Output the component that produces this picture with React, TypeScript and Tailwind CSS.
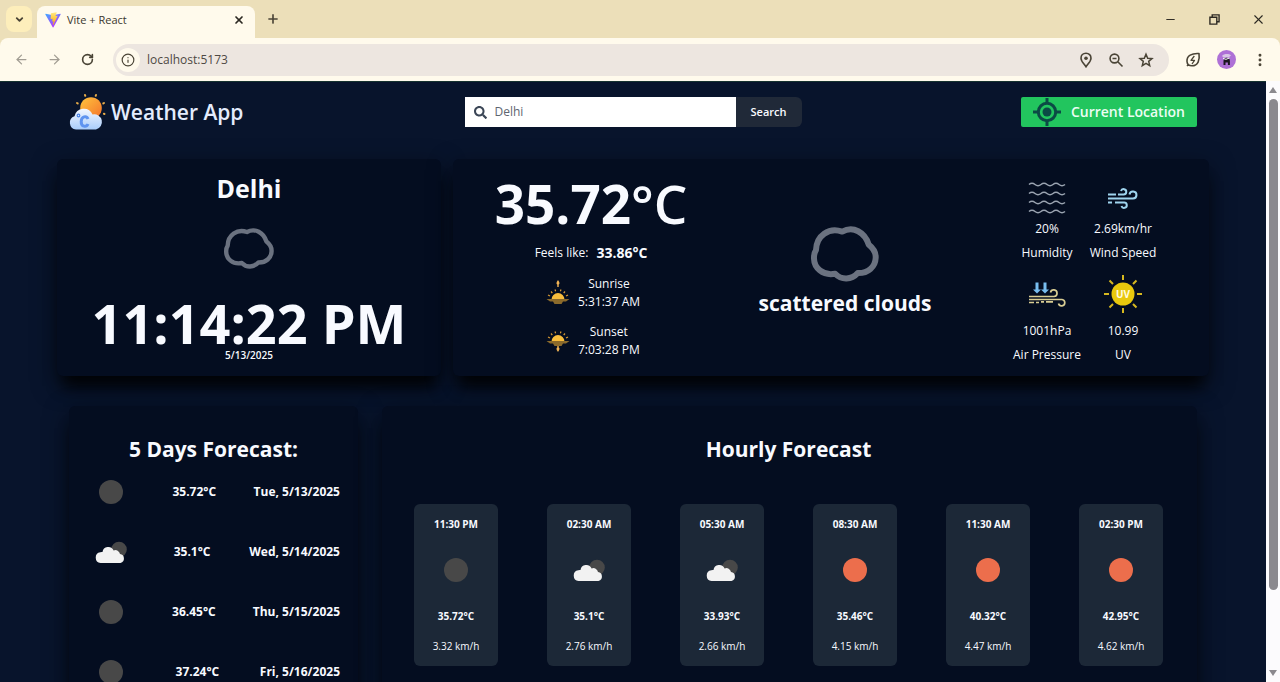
import type { ReactNode } from "react";
import { FaSearch } from "react-icons/fa";
import { ArrowLeft, ArrowRight, Info, RotateCw, MapPin, ZoomOut, Star, Plus, X, Minus, ChevronDown, EllipsisVertical } from "lucide-react";

type Sky = "moon" | "cloud" | "sun";

const days: { sky: Sky; temp: string; date: string }[] = [
  { sky: "moon", temp: "35.72°C", date: "Tue, 5/13/2025" },
  { sky: "cloud", temp: "35.1°C", date: "Wed, 5/14/2025" },
  { sky: "moon", temp: "36.45°C", date: "Thu, 5/15/2025" },
  { sky: "moon", temp: "37.24°C", date: "Fri, 5/16/2025" },
];

const hours: { time: string; sky: Sky; temp: string; wind: string }[] = [
  { time: "11:30 PM", sky: "moon", temp: "35.72°C", wind: "3.32 km/h" },
  { time: "02:30 AM", sky: "cloud", temp: "35.1°C", wind: "2.76 km/h" },
  { time: "05:30 AM", sky: "cloud", temp: "33.93°C", wind: "2.66 km/h" },
  { time: "08:30 AM", sky: "sun", temp: "35.46°C", wind: "4.15 km/h" },
  { time: "11:30 AM", sky: "sun", temp: "40.32°C", wind: "4.47 km/h" },
  { time: "02:30 PM", sky: "sun", temp: "42.95°C", wind: "4.62 km/h" },
];

const card = "rounded-md bg-[#040d20] shadow-[0_16px_14px_-6px_#000000cc,0_8px_24px_#00000080]";

function ViteLogo() {
  return (
    <svg viewBox="0 0 410 404" className="size-4" aria-hidden="true">
      <defs>
        <linearGradient id="viteBody" x1="0" y1="0" x2="0.6" y2="1">
          <stop stopColor="#41a8ff" />
          <stop offset="1" stopColor="#bd34fe" />
        </linearGradient>
        <linearGradient id="viteBolt" x1="0" y1="0" x2="0" y2="1">
          <stop stopColor="#ffea83" />
          <stop offset="1" stopColor="#ffa800" />
        </linearGradient>
      </defs>
      <path d="M400 59 216 389c-4 7-14 7-18 0L10 59c-4-7 2-16 10-14l185 33 185-33c8-2 14 7 10 14Z" fill="url(#viteBody)" />
      <path d="M293 2 156 28c-2 1-4 3-4 5l-8 142c0 4 3 6 6 5l38-9c4-1 7 3 6 6l-11 56c-1 3 3 6 6 5l24-7c4-1 7 2 6 6l-18 87c-1 5 6 8 9 4l113-227c2-3-1-7-5-6l-39 7c-4 1-7-2-6-6l26-88c1-4-2-7-6-6Z" fill="url(#viteBolt)" />
    </svg>
  );
}

function BrandIcon() {
  return (
    <svg viewBox="0 0 38 38" className="size-[38px]" aria-hidden="true">
      <defs>
        <linearGradient id="brandSun" x1="0" y1="0" x2="1" y2="1">
          <stop stopColor="#ffc53d" />
          <stop offset="1" stopColor="#f4722b" />
        </linearGradient>
        <linearGradient id="brandCloud" x1="0" y1="0" x2="0" y2="1">
          <stop stopColor="#f3f7ff" />
          <stop offset="1" stopColor="#a9cdfb" />
        </linearGradient>
      </defs>
      <g stroke="#e9ae4a" strokeWidth="2" strokeLinecap="round">
        <path d="M16 2l.3.800M27 2l-.3.800M35 10l-.7.400M35.500 21l-.6-.2M8 10l.7.400" />
      </g>
      <circle cx="22" cy="15" r="10.800" fill="url(#brandSun)" />
      <path d="M7 36.500a6.800 6.800 0 0 1-1.500-13.200A9.500 9.500 0 0 1 23.500 21.500A7.600 7.600 0 0 1 27 36.500Z" fill="url(#brandCloud)" />
      <circle cx="9.500" cy="22.500" r="1.300" fill="none" stroke="#4a84e8" strokeWidth="1.200" />
      <path d="M19 26C17.500 22.500 12.500 23 12.200 28.500c-.2 5.500 5.300 6 6.800 2.500" fill="none" stroke="#5f94f0" strokeWidth="3" />
    </svg>
  );
}

function CloudOutline({ className }: { className: string }) {
  return (
    <svg viewBox="0 0 205 167" className={className} role="img" aria-label="Scattered clouds">
      <path
        d="M94 16C128-2 162 18 174 55C188 66 196 78 195 95C194 122 172 142 141 141C122 162 92 163 73 143C36 150 8 126 9 94C9 84 11 78 15 72C16 28 54 2 94 16Z"
        fill="none"
        stroke="#6b7280"
        strokeWidth="18"
        strokeLinejoin="round"
      />
    </svg>
  );
}

function SkyIcon({ sky }: { sky: Sky }) {
  return (
    <svg viewBox="0 0 48 48" className="size-12" aria-hidden="true">
      {sky === "moon" && <circle cx="24" cy="24" r="12" fill="#484848" />}
      {sky === "sun" && <circle cx="24" cy="24" r="12" fill="#ec6e4c" />}
      {sky === "cloud" && (
        <>
          <circle cx="32" cy="21.500" r="7.800" fill="#484848" />
          <path d="M13.500 35a5.400 5.400 0 0 1-.2-10.700A3 3 0 0 1 15.500 24A5.800 5.800 0 0 1 26.600 22.500A4.600 4.600 0 0 1 33 26A4.600 4.600 0 0 1 33.500 35Z" fill="#f2f2f2" />
        </>
      )}
    </svg>
  );
}

function HorizonIcon({ rising }: { rising: boolean }) {
  return (
    <svg viewBox="0 0 24 26" className="h-[26px] w-6" aria-hidden="true">
      <g transform={rising ? "translate(0 7)" : "translate(0 1)"}>
        <path d="M5.500 12.500a6.500 6.500 0 0 1 13 0Z" fill="#f8bd3c" />
        <path d="M.500 12h23L20 14.500H17L15.500 17h-7L7 14.500H4Z" fill="#8b6a2b" />
        <path d="M2 8l2 1M5 4.500l1.300 1.500M9 2.500l.600 1.800M15 2.500l-.6 1.800M19 4.500l-1.300 1.500M22 8l-2 1" stroke="#d99a34" strokeWidth="1.200" />
      </g>
      {rising ? (
        <path d="M12 0c2 2.500 1.800 4 .700 4.500V7h-1.400V4.500C10.200 4 10 2.500 12 0Z" fill="#f2b455" />
      ) : (
        <path d="M12 24c2-2.500 1.800-4 .700-4.500V18h-1.400v1.500C10.200 20 10 21.500 12 24Z" fill="#f2b455" />
      )}
    </svg>
  );
}

function HumidityIcon() {
  const wave = "q3-2.400 6 0t6 0 6 0 6 0 6 0 6 0";
  return (
    <svg viewBox="0 0 38 38" className="size-[38px]" fill="none" stroke="#9aa3b0" strokeWidth="1.600" aria-hidden="true">
      <path d={`M1 5.500${wave}M1 14.500${wave}M1 23.500${wave}M1 32.500${wave}`} />
    </svg>
  );
}

function WindIcon() {
  return (
    <svg viewBox="0 0 38 38" className="size-[38px]" fill="none" stroke="#9fd4ee" strokeWidth="2" aria-hidden="true">
      <path d="M4 19.500h25a3.500 3.500 0 1 0-3.500-4M4 15.500h8M14 15.500h5.500a2.700 2.700 0 1 0-2.500-3.500M4 23.500h4M11 23.500h9a2.700 2.700 0 1 1-2.500 3.500" />
    </svg>
  );
}

function PressureIcon() {
  return (
    <svg viewBox="0 0 38 38" className="size-[38px]" fill="none" aria-hidden="true">
      <path d="M7.500 7.500h3V14.500H13l-4 4-4-4h2.500ZM15.500 7.500h3V14.500H21l-4 4-4-4h2.500Z" fill="#78bdf0" />
      <g stroke="#d9cd93" strokeWidth="1.700">
        <path d="M1 21.500h25a3.300 3.300 0 1 0-3.500-4M1 24.500h33a3.200 3.200 0 1 1-3.500 4M1 27.500h5M8 27.500h3M13 26.800h3M18 26.800h7" />
      </g>
    </svg>
  );
}

function UvIcon() {
  return (
    <svg viewBox="0 0 38 38" className="size-[38px]" aria-hidden="true">
      <path d="M19 0v5M19 33v5M0 19h5M33 19h5M5.500 5.500 9 9M29 29l3.500 3.500M5.500 32.500 9 29M29 9l3.500-3.500" stroke="#d6b71f" strokeWidth="2" />
      <circle cx="19" cy="19" r="11.500" fill="#e9c80d" />
      <text x="19" y="22.500" textAnchor="middle" fontSize="10" fontWeight="700" fill="#fffbe0">UV</text>
    </svg>
  );
}

function TargetIcon() {
  return (
    <svg viewBox="0 0 28 28" className="size-7" fill="none" stroke="#0b4a45" aria-hidden="true">
      <circle cx="14" cy="14" r="8.700" strokeWidth="3" />
      <path d="M14 0v5M14 23v5M0 14h5M23 14h5" strokeWidth="3" />
      <circle cx="14" cy="14" r="4.500" fill="#0b4a45" stroke="none" />
    </svg>
  );
}

function Stat({ icon, value, label }: { icon: ReactNode; value: string; label: string }) {
  return (
    <div className="flex w-[76px] flex-col items-center whitespace-nowrap text-xs leading-6 font-medium">
      {icon}
      <span>{value}</span>
      <span>{label}</span>
    </div>
  );
}

function SunTime({ rising, label, time }: { rising: boolean; label: string; time: string }) {
  return (
    <div className="flex items-center gap-2">
      <HorizonIcon rising={rising} />
      <div className="text-center text-xs leading-[18px] font-medium">
        <p>{label}</p>
        <p>{time}</p>
      </div>
    </div>
  );
}

function BrowserBar() {
  const round = "flex size-6 items-center justify-center";
  return (
    <header className="shrink-0 bg-[#ecdfb9] text-[#4a4436]">
      <div className="flex h-[38px] items-center">
        <button aria-label="Search tabs" className="ml-1.5 flex size-[26px] items-center justify-center rounded-lg bg-[#fdeebb]">
          <ChevronDown size={11} strokeWidth={4} />
        </button>
        <div className="ml-[5px] flex h-8 w-[218px] items-center self-end rounded-t-lg bg-[#fffaec] pr-2 pb-1 pl-2">
          <ViteLogo />
          <span className="ml-1.5 flex-1 text-[11px] text-[#3b372e]">Vite + React</span>
          <button aria-label="Close tab" className="flex size-4 items-center justify-center text-[#2c2922]">
            <X size={12} strokeWidth={3.4} />
          </button>
        </div>
        <button aria-label="New tab" className="ml-2 flex size-5 items-center justify-center">
          <Plus size={14} strokeWidth={2.8} />
        </button>
        <div className="ml-auto flex items-center gap-5 pr-2.5 text-[#2c2922]">
          <button aria-label="Minimize" className={round}><Minus size={13} strokeWidth={1.8} /></button>
          <button aria-label="Restore" className={round}>
            <svg viewBox="0 0 12 12" className="size-[11px]" fill="none" stroke="currentColor" strokeWidth="1.500"><path d="M1 3.500h7.500V11H1ZM3.500 3.500V1H11v7.500H8.500" /></svg>
          </button>
          <button aria-label="Close" className={round}><X size={15} strokeWidth={1.8} /></button>
        </div>
      </div>
      <div className="flex h-[43px] items-center rounded-t-lg bg-[#fffaec] pr-2 pl-[9px]">
        <div className="flex gap-[9px]">
          <button aria-label="Back" className={`${round} text-[#a29d93]`}><ArrowLeft size={15} /></button>
          <button aria-label="Forward" className={`${round} text-[#a29d93]`}><ArrowRight size={15} /></button>
          <button aria-label="Reload" className={round}><RotateCw size={13} strokeWidth={3} /></button>
        </div>
        <div className="ml-3.5 flex h-8 flex-1 items-center rounded-full bg-[#ede6e0] pr-[11px] pl-[3px]">
          <span className={`${round} rounded-full bg-[#fffaec]`}><Info size={14} /></span>
          <input aria-label="Address" defaultValue="localhost:5173" className="ml-[7px] min-w-0 flex-1 bg-transparent text-xs text-[#4d4944] outline-none" />
          <div className="flex gap-[6px]">
            <button aria-label="Location access" className={round}>
              <svg viewBox="0 0 16 16" className="size-4" fill="none" stroke="currentColor" strokeWidth="1.600">
                <path d="M8 1.200C5 1.200 3 3.400 3 6.200c0 3 2.500 5 5 8.600 2.500-3.600 5-5.600 5-8.600 0-2.800-2-5-5-5Z" />
                <circle cx="8" cy="6.200" r="1.800" fill="currentColor" stroke="none" />
              </svg>
            </button>
            <button aria-label="Zoom" className={round}>
              <svg viewBox="0 0 16 16" className="size-4" fill="none" stroke="currentColor" strokeWidth="1.600">
                <circle cx="6.500" cy="6.500" r="4.400" />
                <path d="M4.500 6.500h4M9.800 9.800 14.500 14.500" />
              </svg>
            </button>
            <button aria-label="Bookmark" className={round}>
              <svg viewBox="0 0 16 16" className="size-4" fill="none" stroke="currentColor" strokeWidth="1.500">
                <path d="m8 2.200 1.700 4 4.300.4-3.300 2.800 1 4.300L8 11.400l-3.700 2.300 1-4.300L2 6.600l4.300-.4Z" />
              </svg>
            </button>
          </div>
        </div>
        <button aria-label="Energy saver" className={`${round} ml-3`}>
          <svg viewBox="0 0 16 16" className="size-4" fill="none" stroke="currentColor" strokeWidth="1.600" strokeLinejoin="round">
            <path d="M14 1.500C7 1 1.500 3.500 2 9.500c.200 3 2.500 4.300 5 4.300C13 13.800 15 8 14 1.500ZM2 14l1.500-1.500" />
            <path d="M9.300 4 6 8.300h3.500L7 12" strokeWidth="1.300" />
          </svg>
        </button>
        <button aria-label="Profile" className={`${round} ml-[9px]`}>
          <svg viewBox="0 0 19 19" className="size-[19px]">
            <circle cx="9.500" cy="9.500" r="9.500" fill="#ae70d6" />
            <path d="M5 6C7 3.500 12 3.500 14 5.500L11.500 7.500H6.500Z" fill="#d9c6e6" />
            <path d="M6.500 15v-4a3.200 3.200 0 0 1 6.400 0v4h-2v-2.500H8.500V15Z" fill="#1c1722" />
            <path d="M6 8.500l3 .800 3.500-1.300" stroke="#fff" strokeWidth="1" fill="none" />
          </svg>
        </button>
        <button aria-label="Menu" className={`${round} ml-[10px]`}><EllipsisVertical size={16} strokeWidth={2.4} /></button>
      </div>
    </header>
  );
}

export default function App() {
  return (
    <div className="flex h-screen flex-col overflow-hidden font-['Open_Sans','Noto_Sans',sans-serif]">
      <BrowserBar />
      <div className="flex min-h-0 flex-1">
        <main className="flex min-w-0 flex-1 flex-col overflow-hidden border-t border-[#16322f] bg-[#08142c] px-[69px] pt-[11px] text-[#f8faff]">
          <div className="flex shrink-0 items-center justify-between">
            <div className="flex flex-1 items-center gap-1">
              <BrandIcon />
              <h1 className="text-[21px] leading-[38px] font-semibold text-[#e3ecfd]">Weather App</h1>
            </div>
            <form className="flex h-[30px]" onSubmit={(e) => e.preventDefault()}>
              <label className="flex w-[271px] items-center gap-2 bg-white pl-[9px] text-[#3b4656]">
                <FaSearch size={13} />
                <input aria-label="City" defaultValue="Delhi" className="min-w-0 flex-1 text-xs text-[#5d6570] outline-none" />
              </label>
              <button className="w-[66px] rounded-r-md bg-[#202938] text-[11px] font-semibold">Search</button>
            </form>
            <div className="flex flex-1 justify-end">
              <button className="flex h-[30px] items-center gap-[10px] rounded-xs bg-[#22c55e] px-3 text-sm font-semibold whitespace-nowrap text-[#ecfdf3]">
                <TargetIcon />
                Current Location
              </button>
            </div>
          </div>

          <div className="-mx-3 mt-7 flex h-[217px] shrink-0 gap-3">
            <section className={`flex w-1/3 flex-col items-center ${card}`}>
              <h2 className="mt-3 text-[25px] leading-[34px] font-bold">Delhi</h2>
              <CloudOutline className="mt-[23px] h-[41px] w-[50px]" />
              <p className="mt-7 text-[54px] leading-[52px] font-bold whitespace-nowrap">11:14:22 PM</p>
              <p className="text-[10px] leading-3 font-semibold">5/13/2025</p>
            </section>

            <section className={`grid flex-1 grid-cols-[276fr_232fr_248fr] ${card}`}>
              <div className="flex flex-col items-center pt-3.5">
                <p className="text-[53px] leading-[62px] font-bold whitespace-nowrap">35.72<span className="font-semibold">°C</span></p>
                <p className="mt-1.5 flex items-center gap-2 text-xs leading-6 font-medium">Feels like: <strong className="text-sm leading-6 font-bold">33.86°C</strong></p>
                <div className="mt-[10px] flex flex-col gap-3 pl-1">
                  <SunTime rising label="Sunrise" time="5:31:37 AM" />
                  <SunTime rising={false} label="Sunset" time="7:03:28 PM" />
                </div>
              </div>
              <div className="flex flex-col items-center pt-[67px]">
                <CloudOutline className="h-14 w-[68px]" />
                <p className="mt-[5px] text-[21px] leading-8 font-bold whitespace-nowrap">scattered clouds</p>
              </div>
              <div className="grid grid-cols-[76px_76px] content-start justify-center gap-y-[10px] pt-5">
                <Stat icon={<HumidityIcon />} value="20%" label="Humidity" />
                <Stat icon={<WindIcon />} value="2.69km/hr" label="Wind Speed" />
                <Stat icon={<span className="mb-1.5"><PressureIcon /></span>} value="1001hPa" label="Air Pressure" />
                <Stat icon={<span className="mb-1.5"><UvIcon /></span>} value="10.99" label="UV" />
              </div>
            </section>
          </div>

          <div className="mt-[30px] grid shrink-0 grid-cols-[289fr_815fr] gap-6">
            <section className={`px-[18px] pt-7 pb-6 ${card}`}>
              <h2 className="text-center text-[21px] leading-[30px] font-bold">5 Days Forecast:</h2>
              <ul className="mt-1 flex flex-col gap-3">
                {days.map((d) => (
                  <li key={d.date} className="flex h-12 items-center justify-between text-xs font-bold whitespace-nowrap">
                    <SkyIcon sky={d.sky} />
                    <span>{d.temp}</span>
                    <span>{d.date}</span>
                  </li>
                ))}
              </ul>
            </section>
            <section className={`pt-7 pr-[34px] pl-8 ${card}`}>
              <h2 className="text-center text-[21px] leading-[30px] font-bold">Hourly Forecast</h2>
              <ul className="mt-10 flex justify-between">
                {hours.map((h) => (
                  <li key={h.time} className="flex h-[162px] w-[84px] flex-col items-center rounded-md bg-[#1c2837] pt-3 text-[10px] leading-4 font-bold">
                    <span>{h.time}</span>
                    <span className="my-[14px]"><SkyIcon sky={h.sky} /></span>
                    <span>{h.temp}</span>
                    <span className="mt-[14px] font-medium">{h.wind}</span>
                  </li>
                ))}
              </ul>
            </section>
          </div>
        </main>
        <div className="flex w-3.5 shrink-0 flex-col items-center bg-[#fcfbfd] py-1.5" aria-hidden="true">
          <svg viewBox="0 0 8 6" className="h-1.5 w-2"><path d="M4 0 8 6H0Z" fill="#8b898e" /></svg>
          <div className="mt-1.5 w-[9px] grow-[491] rounded-full bg-[#8b898e]" />
          <div className="grow-[80]" />
          <svg viewBox="0 0 8 6" className="h-1.5 w-2"><path d="M4 6 8 0H0Z" fill="#8b898e" /></svg>
        </div>
      </div>
    </div>
  );
}
